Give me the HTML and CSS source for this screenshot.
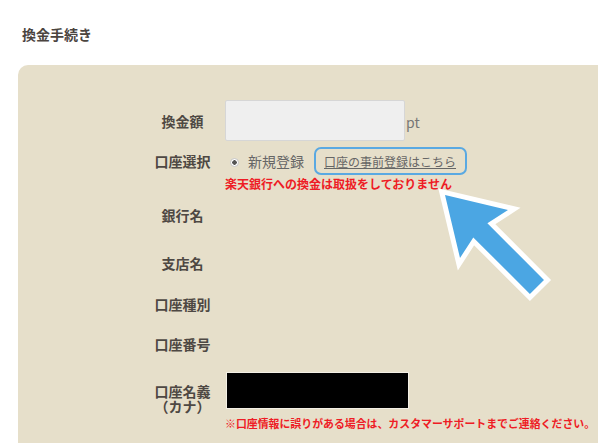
FILE: index.html
```html
<!DOCTYPE html>
<html lang="ja">

<head>
    <meta charset="UTF-8">
    <meta name="viewport" content="width=device-width, initial-scale=1.0">
    <title>換金手続き</title>
    <link rel="stylesheet" href="styles.css">
</head>

<body>
    <h1 class="page-title">換金手続き</h1>

    <div class="panel">
        <div class="form-row row-amount">
            <div class="label">換金額</div>
            <div class="field">
                <input type="text" class="amount-input">
                <span class="unit">pt</span>
            </div>
        </div>

        <div class="form-row row-account">
            <div class="label">口座選択</div>
            <div class="field">
                <span class="radio"></span>
                <span class="radio-text">新規登録</span>
                <span class="link-box"><a href="#">口座の事前登録はこちら</a></span>
            </div>
        </div>
        <p class="notice notice-bank">楽天銀行への換金は取扱をしておりません</p>

        <div class="form-row row-bank">
            <div class="label">銀行名</div>
            <div class="field"></div>
        </div>

        <div class="form-row row-branch">
            <div class="label">支店名</div>
            <div class="field"></div>
        </div>

        <div class="form-row row-type">
            <div class="label">口座種別</div>
            <div class="field"></div>
        </div>

        <div class="form-row row-number">
            <div class="label">口座番号</div>
            <div class="field"></div>
        </div>

        <div class="form-row row-holder">
            <div class="label label-holder">口座名義<br>（カナ）</div>
            <div class="field">
                <div class="masked"></div>
            </div>
        </div>
        <p class="notice notice-contact">※口座情報に誤りがある場合は、カスタマーサポートまでご連絡ください。</p>

        <!-- 注釈の矢印 -->
        <svg class="pointer" viewBox="430 180 125 125" width="125" height="125">
            <polygon points="445,195 508,210 487.4,223.3 544,279.9 529.9,294 473.3,237.4 460,258"
                fill="#4ba6e3" stroke="#fff" stroke-width="10" stroke-linejoin="miter" paint-order="stroke fill" />
        </svg>
    </div>
</body>

</html>
```

FILE: styles.css
```css
body {
    font-family: "Noto Sans CJK JP", "Noto Sans", sans-serif;
    margin: 0;
    padding: 24px 0 0 0;
    background: #fff;
    color: #4e4843;
    overflow: hidden;
}

.page-title {
    font-size: 14px;
    line-height: 20px;
    font-weight: bold;
    margin: 0 0 21px 22px;
    color: #4b443f;
}

.panel {
    position: relative;
    margin: 0 2px 0 18px;
    padding: 35px 0 13px 122px;
    background-color: #e6dfca;
    border-radius: 10px 0 0 0;
}

.form-row {
    display: grid;
    grid-template-columns: 85px 1fr;
    align-items: center;
    height: 30px;
}

.label {
    font-size: 14px;
    font-weight: bold;
    text-align: center;
    white-space: nowrap;
}

.field {
    display: flex;
    align-items: center;
}

.row-amount {
    height: 41px;
}

.amount-input {
    width: 180px;
    height: 41px;
    box-sizing: border-box;
    margin: 0;
    border: 1px solid #d6d6d6;
    border-radius: 2px;
    background-color: #efefef;
}

.unit {
    margin-left: 1px;
    margin-top: 2px;
    font-size: 14px;
    color: #777;
}

.row-account {
    margin-top: 6px;
    height: 28px;
}

.radio {
    width: 9px;
    height: 9px;
    margin-left: 5px;
    margin-top: 2px;
    border: 1px solid #c4c4c4;
    border-radius: 50%;
    background: #fff radial-gradient(circle, #555 0 2px, transparent 2.5px);
    box-sizing: border-box;
}

.radio-text {
    margin-left: 9px;
    font-size: 14px;
    color: #666;
}

.link-box {
    display: inline-flex;
    align-items: center;
    height: 28px;
    margin-left: 10px;
    padding: 0 9px 0 8px;
    border: 2px solid #5aa9e2;
    border-radius: 7px;
    box-sizing: border-box;
}

.link-box a {
    font-size: 12px;
    color: #666;
    text-decoration: underline;
}

.notice {
    margin: 0 0 0 85px;
    font-size: 12px;
    line-height: 14px;
    font-weight: bold;
    color: #ee1c25;
    white-space: nowrap;
}

.notice-bank {
    margin-top: 2px;
}

.row-bank {
    margin-top: 9px;
}

.row-branch {
    margin-top: 18px;
}

.row-type {
    margin-top: 11px;
}

.row-number {
    margin-top: 10px;
}

.row-holder {
    margin-top: 14px;
    height: 40px;
    align-items: start;
}

.label-holder {
    padding-top: 11px;
    line-height: 15px;
}

.masked {
    width: 181px;
    height: 35px;
    margin-left: 2px;
    background-color: #000;
    box-shadow: 0 0 0 1px rgba(255, 255, 255, 0.5);
}

.notice-contact {
    margin-top: 3px;
    font-size: 10.9px;
}

.pointer {
    position: absolute;
    left: 412px;
    top: 115px;
}
```
